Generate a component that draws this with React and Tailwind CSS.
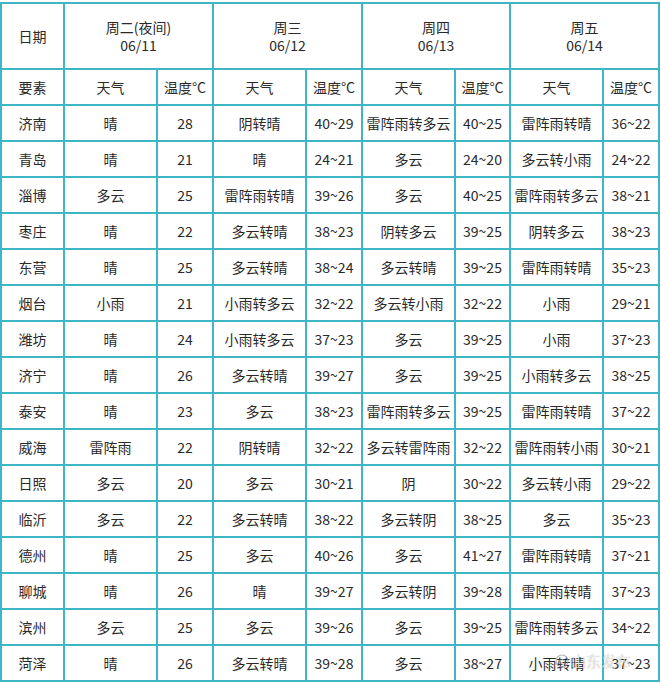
import React from 'react';

const days = [
    { name: '周二(夜间)', date: '06/11' },
    { name: '周三', date: '06/12' },
    { name: '周四', date: '06/13' },
    { name: '周五', date: '06/14' },
];

// city, then [weather, temp] for each day
const rows = [
    ['济南', '晴', '28', '阴转晴', '40~29', '雷阵雨转多云', '40~25', '雷阵雨转晴', '36~22'],
    ['青岛', '晴', '21', '晴', '24~21', '多云', '24~20', '多云转小雨', '24~22'],
    ['淄博', '多云', '25', '雷阵雨转晴', '39~26', '多云', '40~25', '雷阵雨转多云', '38~21'],
    ['枣庄', '晴', '22', '多云转晴', '38~23', '阴转多云', '39~25', '阴转多云', '38~23'],
    ['东营', '晴', '25', '多云转晴', '38~24', '多云转晴', '39~25', '雷阵雨转晴', '35~23'],
    ['烟台', '小雨', '21', '小雨转多云', '32~22', '多云转小雨', '32~22', '小雨', '29~21'],
    ['潍坊', '晴', '24', '小雨转多云', '37~23', '多云', '39~25', '小雨', '37~23'],
    ['济宁', '晴', '26', '多云转晴', '39~27', '多云', '39~25', '小雨转多云', '38~25'],
    ['泰安', '晴', '23', '多云', '38~23', '雷阵雨转多云', '39~25', '雷阵雨转晴', '37~22'],
    ['威海', '雷阵雨', '22', '阴转晴', '32~22', '多云转雷阵雨', '32~22', '雷阵雨转小雨', '30~21'],
    ['日照', '多云', '20', '多云', '30~21', '阴', '30~22', '多云转小雨', '29~22'],
    ['临沂', '多云', '22', '多云转晴', '38~22', '多云转阴', '38~25', '多云', '35~23'],
    ['德州', '晴', '25', '多云', '40~26', '多云', '41~27', '雷阵雨转晴', '37~21'],
    ['聊城', '晴', '26', '晴', '39~27', '多云转阴', '39~28', '雷阵雨转晴', '37~23'],
    ['滨州', '多云', '25', '多云', '39~26', '多云', '39~25', '雷阵雨转多云', '34~22'],
    ['菏泽', '晴', '26', '多云转晴', '39~28', '多云', '38~27', '小雨转晴', '37~23'],
];

const Cell = ({ children, className = '' }) => (
    <div className={`bg-white flex items-center justify-center text-center ${className}`}>
        {children}
    </div>
);

const App = () => {
    return (
        <div
            className="relative w-[661px] h-[683px] bg-white pt-[2px] text-[14px] text-[#2a2a2a] leading-[18px]"
            style={{ fontFamily: '"Noto Sans CJK SC", "Noto Sans", sans-serif' }}
        >
            <div className="grid w-[660px] grid-cols-[61px_91px_54px_91px_54px_91px_53px_91px_54px] grid-rows-[64px_34px_repeat(16,34px)] gap-[2px] p-[2px] bg-[#3fb6c6]">
                <Cell>日期</Cell>
                {days.map((d) => (
                    <Cell key={d.date} className="col-span-2 flex-col">
                        <span>{d.name}</span>
                        <span>{d.date}</span>
                    </Cell>
                ))}

                <Cell>要素</Cell>
                {days.map((d) => (
                    <React.Fragment key={d.date + 'h'}>
                        <Cell>天气</Cell>
                        <Cell>温度°C</Cell>
                    </React.Fragment>
                ))}

                {rows.map((r) =>
                    r.map((v, i) => (
                        <Cell key={r[0] + i} className="whitespace-nowrap">
                            {v}
                        </Cell>
                    ))
                )}
            </div>

            {/* weibo watermark */}
            <div className="absolute left-[555px] top-[652px] flex items-center gap-[2px] text-[15px] text-white/70 pointer-events-none [text-shadow:0_0_1px_rgba(0,0,0,0.35)]">
                <svg width="14" height="14" viewBox="0 0 14 14" className="opacity-70">
                    <circle cx="7" cy="7" r="6" fill="none" stroke="#999" strokeWidth="1.2" />
                    <ellipse cx="7" cy="8" rx="3" ry="2.2" fill="none" stroke="#999" strokeWidth="1" />
                </svg>
                <span>山东发布</span>
            </div>
        </div>
    );
};

export default App;
